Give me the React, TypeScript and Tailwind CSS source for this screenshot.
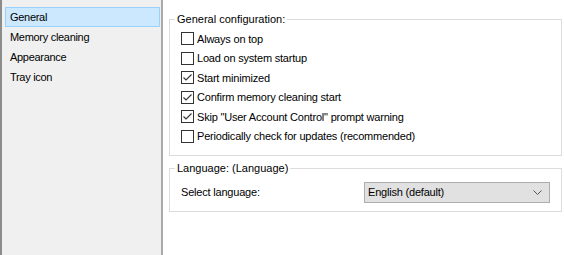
import React from "react";

const font = { fontFamily: '"Liberation Sans", Arial, sans-serif' };

function Check({ checked }: { checked: boolean }) {
  return (
    <span className="w-[13px] h-[13px] border border-[#333333] bg-white flex items-center justify-center shrink-0">
      {checked && (
        <svg width="11" height="11" viewBox="0 0 11 11">
          <path d="M1.5 5.5 L4 8 L9.5 2.5" fill="none" stroke="#333333" strokeWidth="1.1" />
        </svg>
      )}
    </span>
  );
}

const items: [string, boolean][] = [
  ["Always on top", false],
  ["Load on system startup", false],
  ["Start minimized", true],
  ["Confirm memory cleaning start", true],
  ['Skip "User Account Control" prompt warning', true],
  ["Periodically check for updates (recommended)", false],
];

export default function App() {
  return (
    <div className="w-[564px] h-[255px] flex bg-white text-[11px] text-black overflow-hidden" style={font}>
      <div className="w-[163px] h-full bg-[#f0f0f0] border-l-2 border-l-[#8c8c8c] border-r-2 border-r-[#a9a9a9] pt-[7px] pl-[3px] pr-[1px] tracking-[-0.3px]">
        <div className="h-[20px] flex items-center pl-[4px] bg-[#cce8ff] border border-[#99d1ff]">General</div>
        <div className="h-[20px] flex items-center pl-[5px]">Memory cleaning</div>
        <div className="h-[20px] flex items-center pl-[5px]">Appearance</div>
        <div className="h-[20px] flex items-center pl-[5px]">Tray icon</div>
      </div>
      <div className="flex-1 pl-[6px] pr-[2px] flex flex-col">
        <fieldset className="mt-[12px] border border-[#dcdcdc] pl-[11px] pt-[3px] pb-[9px]">
          <legend className="ml-[-6px] px-[2px] leading-[14px]">General configuration:</legend>
          {items.map(([label, c]) => (
            <div key={label} className="h-[19.5px] flex items-center gap-[3px]">
              <Check checked={c} />
              <span className="tracking-[-0.2px]">{label}</span>
            </div>
          ))}
        </fieldset>
        <fieldset className="mt-[5px] border border-[#dcdcdc] pl-[11px] pr-[11px] pt-[7px] pb-[8px]">
          <legend className="ml-[-6px] px-[2px] leading-[14px]">Language: (Language)</legend>
          <div className="flex items-center justify-between">
            <span className="tracking-[-0.2px]">Select language:</span>
            <div className="w-[186px] h-[21px] bg-[#e1e1e1] border border-[#adadad] flex items-center justify-between pl-[3px] pr-[7px]">
              <span className="tracking-[-0.2px]">English (default)</span>
              <svg width="9" height="5" viewBox="0 0 9 5">
                <path d="M0.5 0.5 L4.5 4.5 L8.5 0.5" fill="none" stroke="#555555" strokeWidth="1" />
              </svg>
            </div>
          </div>
        </fieldset>
      </div>
    </div>
  );
}
